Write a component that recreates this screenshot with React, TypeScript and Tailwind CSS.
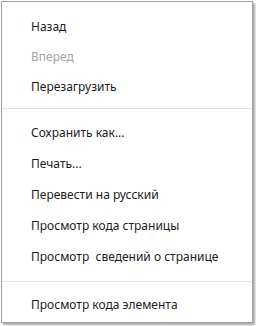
const font = { fontFamily: '"Noto Sans", "Open Sans", sans-serif' }

type Item = { label: string; disabled?: boolean; h: string } | { sep: string }

const items: Item[] = [
  { label: 'Назад', h: 'h-[30px]' },
  { label: 'Вперед', disabled: true, h: 'h-[30px]' },
  { label: 'Перезагрузить', h: 'h-[30px]' },
  { sep: 'mt-[6px] mb-[8px]' },
  { label: 'Сохранить как...', h: 'h-[31px]' },
  { label: 'Печать...', h: 'h-[31px]' },
  { label: 'Перевести на русский', h: 'h-[31px]' },
  { label: 'Просмотр кода страницы', h: 'h-[31px]' },
  { label: 'Просмотр  сведений о странице', h: 'h-[31px]' },
  { sep: 'mt-[9px] mb-[7px]' },
  { label: 'Просмотр кода элемента', h: 'h-[31px]' },
]

export default function App() {
  return (
    <div className="w-[256px] h-[326px] bg-white p-px" style={font}>
      <div className="w-[252px] h-[322px] bg-white border border-[#a0a0a0] shadow-[2px_2px_2px_rgba(0,0,0,0.35)] pt-[10px] flex flex-col">
        {items.map((it, i) =>
          'sep' in it ? (
            <div key={i} className={`h-px bg-[#e4e4e4] shrink-0 ${it.sep}`} />
          ) : (
            <div
              key={i}
              className={`${it.h} shrink-0 flex items-center pl-[29px] text-[12px] whitespace-pre ${it.disabled ? 'text-[#a3a3a3]' : 'text-[#1b1b1b]'}`}
            >
              {it.label}
            </div>
          )
        )}
      </div>
    </div>
  )
}
